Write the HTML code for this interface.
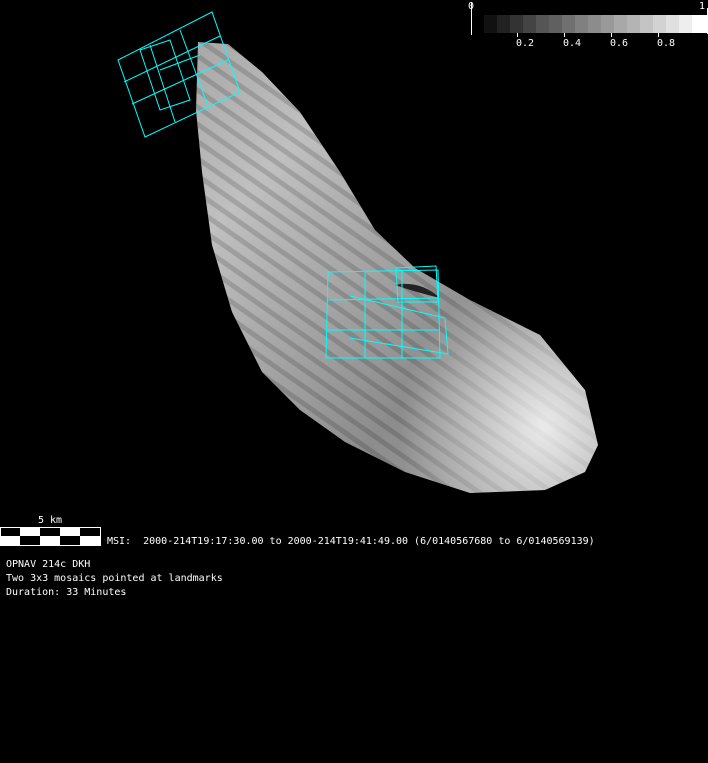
<!DOCTYPE html>
<html><head><style>
body{margin:0;background:#000;width:708px;height:763px;overflow:hidden;position:relative;font-family:"DejaVu Sans Mono","Liberation Mono",monospace;color:#fff}
.t{position:absolute;font-size:10px;white-space:pre;line-height:14px}
</style></head><body>
<svg width="708" height="763" style="position:absolute;left:0;top:0">
<defs>
<linearGradient id="g" x1="0" y1="0" x2="1" y2="1">
<stop offset="0" stop-color="#8a8a8a"/><stop offset="0.3" stop-color="#c0c0c0"/><stop offset="0.55" stop-color="#8c8c8c"/><stop offset="0.8" stop-color="#a8a8a8"/><stop offset="1" stop-color="#e0e0e0"/>
</linearGradient>
<radialGradient id="r" cx="0.85" cy="0.85" r="0.35"><stop offset="0" stop-color="#fff" stop-opacity=".8"/><stop offset="1" stop-color="#fff" stop-opacity="0"/></radialGradient>
<pattern id="s" width="14" height="14" patternUnits="userSpaceOnUse" patternTransform="rotate(35)"><rect width="14" height="5" fill="#000" opacity=".15"/></pattern>
<clipPath id="c"><path d="M198,42 L228,44 L262,72 L300,112 L340,172 L375,230 L415,268 L470,300 L540,335 L585,390 L598,445 L585,472 L545,490 L470,493 L405,472 L345,442 L300,410 L262,372 L232,312 L212,245 L202,172 L196,110 Z"/></clipPath>
</defs>
<g clip-path="url(#c)">
<rect width="708" height="763" fill="url(#g)"/>
<rect width="708" height="763" fill="url(#s)"/>
<rect x="195" y="40" width="410" height="455" fill="url(#r)"/>
</g>
<path d="M395,285 Q420,280 440,298 Q415,292 395,285Z" fill="#222"/>
<g stroke="#0ff" fill="none" stroke-width="1">
<path d="M118,60 L212,12 L240,92 L145,137 Z"/>
<path d="M150,45 L175,122 M180,30 L208,106 M124,82 L220,36 M132,104 L228,60"/>
<path d="M140,50 L170,40 L190,100 L160,110 Z M160,70 L200,55"/>
<path d="M328,272 L438,270 L440,358 L326,358 Z"/>
<path d="M365,272 L365,358 M402,270 L402,358 M328,300 L438,298 M328,330 L440,330"/>
<path d="M396,268 L436,266 L438,302 L398,302 Z M350,296 L445,318 L448,354 L350,338"/>
</g>
<rect x="471" y="2" width="1" height="33" fill="#fff"/>
<rect x="707" y="8" width="1" height="26" fill="#fff"/>
<g>
<rect x="484" y="15" width="13" height="18" fill="#111"/><rect x="497" y="15" width="13" height="18" fill="#222"/><rect x="510" y="15" width="13" height="18" fill="#333"/><rect x="523" y="15" width="13" height="18" fill="#444"/><rect x="536" y="15" width="13" height="18" fill="#555"/><rect x="549" y="15" width="13" height="18" fill="#606060"/><rect x="562" y="15" width="13" height="18" fill="#707070"/><rect x="575" y="15" width="13" height="18" fill="#808080"/><rect x="588" y="15" width="13" height="18" fill="#8c8c8c"/><rect x="601" y="15" width="13" height="18" fill="#999"/><rect x="614" y="15" width="13" height="18" fill="#a8a8a8"/><rect x="627" y="15" width="13" height="18" fill="#b4b4b4"/><rect x="640" y="15" width="13" height="18" fill="#c4c4c4"/><rect x="653" y="15" width="13" height="18" fill="#d2d2d2"/><rect x="666" y="15" width="13" height="18" fill="#e0e0e0"/><rect x="679" y="15" width="13" height="18" fill="#eee"/><rect x="692" y="15" width="15" height="18" fill="#fff"/>
</g>
<g fill="#fff"><rect x="517" y="33" width="1" height="4"/><rect x="564" y="33" width="1" height="4"/><rect x="611" y="33" width="1" height="4"/><rect x="658" y="33" width="1" height="4"/></g>
<rect x="0.5" y="527.5" width="100" height="18" fill="#000" stroke="#fff"/>
<g fill="#fff"><rect x="20" y="528" width="20" height="8"/><rect x="60" y="528" width="20" height="8"/><rect x="0" y="536" width="20" height="9"/><rect x="40" y="536" width="20" height="9"/><rect x="80" y="536" width="20" height="9"/></g>
</svg>
<div class="t" style="left:468px;top:0px">0</div>
<div class="t" style="left:699px;top:0px">1</div>
<div class="t" style="left:516px;top:37px">0.2</div>
<div class="t" style="left:563px;top:37px">0.4</div>
<div class="t" style="left:610px;top:37px">0.6</div>
<div class="t" style="left:657px;top:37px">0.8</div>
<div class="t" style="left:38px;top:514px">5 km</div>
<div class="t" style="left:107px;top:535px">MSI:  2000-214T19:17:30.00 to 2000-214T19:41:49.00 (6/0140567680 to 6/0140569139)</div>
<div class="t" style="left:6px;top:558px">OPNAV 214c DKH
Two 3x3 mosaics pointed at landmarks
Duration: 33 Minutes</div>
</body></html>
